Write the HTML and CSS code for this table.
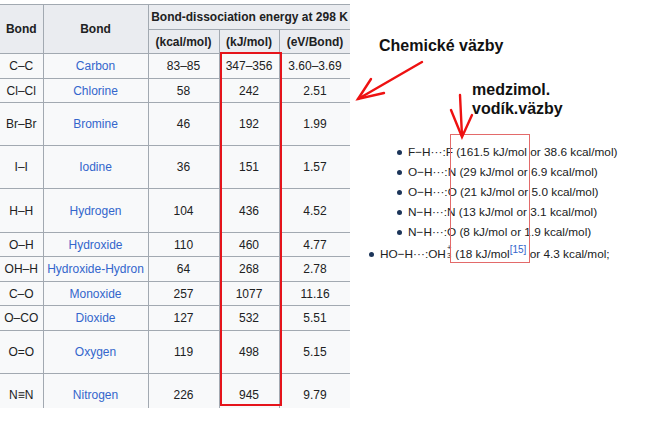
FILE: index.html
```html
<!DOCTYPE html>
<html>
<head>
<meta charset="utf-8">
<link rel="stylesheet" href="styles.css">
</head>
<body>
<div class="page">
  <div class="table-wrap">
    <table class="bde">
      <colgroup>
        <col class="c1"><col class="c2"><col class="c3"><col class="c4"><col class="c5">
      </colgroup>
      <tr class="h1">
        <th rowspan="2" class="first">Bond</th>
        <th rowspan="2">Bond</th>
        <th colspan="3">Bond-dissociation energy at 298 K</th>
      </tr>
      <tr class="h2">
        <th>(kcal/mol)</th><th>(kJ/mol)</th><th>(eV/Bond)</th>
      </tr>
      <tr class="s25"><td class="first">C–C</td><td><a>Carbon</a></td><td>83–85</td><td>347–356</td><td>3.60–3.69</td></tr>
      <tr class="s24"><td class="first">Cl–Cl</td><td><a>Chlorine</a></td><td>58</td><td>242</td><td>2.51</td></tr>
      <tr class="t43"><td class="first">Br–Br</td><td><a>Bromine</a></td><td>46</td><td>192</td><td>1.99</td></tr>
      <tr class="t43"><td class="first">I–I</td><td><a>Iodine</a></td><td>36</td><td>151</td><td>1.57</td></tr>
      <tr class="t44"><td class="first">H–H</td><td><a>Hydrogen</a></td><td>104</td><td>436</td><td>4.52</td></tr>
      <tr class="s24"><td class="first">O–H</td><td><a>Hydroxide</a></td><td>110</td><td>460</td><td>4.77</td></tr>
      <tr class="s25"><td class="first">OH–H</td><td><a>Hydroxide-Hydron</a></td><td>64</td><td>268</td><td>2.78</td></tr>
      <tr class="s24"><td class="first">C–O</td><td><a>Monoxide</a></td><td>257</td><td>1077</td><td>11.16</td></tr>
      <tr class="s25"><td class="first">O–CO</td><td><a>Dioxide</a></td><td>127</td><td>532</td><td>5.51</td></tr>
      <tr class="t43"><td class="first">O=O</td><td><a>Oxygen</a></td><td>119</td><td>498</td><td>5.15</td></tr>
      <tr class="t43"><td class="first">N≡N</td><td><a>Nitrogen</a></td><td>226</td><td>945</td><td>9.79</td></tr>
    </table>
  </div>
  <div class="notes">
    <div class="title">Chemické väzby</div>
    <div class="subtitle">medzimol.<br>vodík.väzby</div>
    <ul class="hb inner">
      <li>F−H···:F (161.5 kJ/mol or 38.6 kcal/mol)</li>
      <li>O−H···:N (29 kJ/mol or 6.9 kcal/mol)</li>
      <li>O−H···:O (21 kJ/mol or 5.0 kcal/mol)</li>
      <li>N−H···:N (13 kJ/mol or 3.1 kcal/mol)</li>
      <li>N−H···:O (8 kJ/mol or 1.9 kcal/mol)</li>
    </ul>
    <ul class="hb outer">
      <li>HO−H···:OH<span class="ion"><span class="sup">+</span><span class="sub">3</span></span>(18 kJ/mol<a class="ref">[15]</a> or 4.3 kcal/mol;</li>
    </ul>
  </div>
</div>
<svg class="marks" width="661" height="423" viewBox="0 0 661 423">
  <rect x="221" y="53" width="60" height="352" fill="none" stroke="#e5141b" stroke-width="2"/>
  <rect x="450.5" y="134.5" width="79" height="128" fill="none" stroke="#e36a6a" stroke-width="1"/>
  <g stroke="#ee1111" stroke-width="2.4" fill="none" stroke-linecap="round">
    <path d="M422 62 L358 99"/>
    <path d="M371 79 L358 99 L384 93"/>
    <path d="M460 95 L462 136"/>
    <path d="M451 110 L462 137 L472 115"/>
  </g>
</svg>
</body>
</html>
```

FILE: styles.css
```css
html, body {
  margin: 0;
  padding: 0;
  background: #ffffff;
}

body {
  font-family: "Liberation Sans", Arial, sans-serif;
  color: #202122;
  width: 661px;
  height: 423px;
  overflow: hidden;
  position: relative;
}

.page {
  display: flex;
  align-items: flex-start;
}

.table-wrap {
  width: 350px;
  height: 408px;
  overflow: hidden;
  padding-top: 4px;
  box-sizing: border-box;
  flex: none;
}

.bde {
  border-collapse: collapse;
  table-layout: fixed;
  width: 351px;
  font-size: 12px;
  color: #202122;
  background: #f8f9fa;
}

.c1 { width: 43px; }
.c2 { width: 105px; }
.c3 { width: 71px; }
.c4 { width: 60px; }
.c5 { width: 72px; }

.bde th,
.bde td {
  border: 1px solid #a2a9b1;
  padding: 0 2px;
  text-align: center;
  vertical-align: middle;
  white-space: nowrap;
  overflow: hidden;
}

.bde th {
  background: #eaecf0;
  font-weight: bold;
}

.bde .first {
  border-left: none;
}

.bde a {
  color: #3366cc;
  text-decoration: none;
}

.h1 { height: 25px; }
.h2 { height: 24px; }
.s24 { height: 24px; }
.s25 { height: 25px; }
.t43 { height: 43px; }
.t44 { height: 44px; }

.notes {
  display: flex;
  flex-direction: column;
  font-size: 11.8px;
}

.title {
  font-weight: bold;
  font-size: 16px;
  line-height: 20px;
  margin: 36px 0 0 29px;
  color: #111;
}

.subtitle {
  font-weight: bold;
  font-size: 16px;
  line-height: 19px;
  margin: 24px 0 0 122px;
  color: #111;
}

.hb {
  list-style: none;
  margin: 0;
  padding: 0;
}

.hb li {
  position: relative;
  line-height: 20px;
  white-space: nowrap;
}

.hb li::before {
  content: "";
  position: absolute;
  width: 5px;
  height: 5px;
  border-radius: 50%;
  background: #1c3559;
  left: -11px;
  top: 8px;
}

.inner {
  margin-top: 24px;
  padding-left: 58px;
}

.outer {
  margin-top: 2px;
  padding-left: 30px;
}

.ion {
  display: inline-flex;
  flex-direction: column;
  align-items: center;
  gap: 1px;
  vertical-align: middle;
  font-size: 7.5px;
  line-height: 7px;
  margin: -7px 4px 0 1px;
}

.ion .sup,
.ion .sub {
  display: block;
  height: 7px;
}

.ref {
  color: #3366cc;
  font-size: 10px;
  vertical-align: 5px;
  line-height: 0;
}

.marks {
  position: absolute;
  left: 0;
  top: 0;
  pointer-events: none;
}
```
